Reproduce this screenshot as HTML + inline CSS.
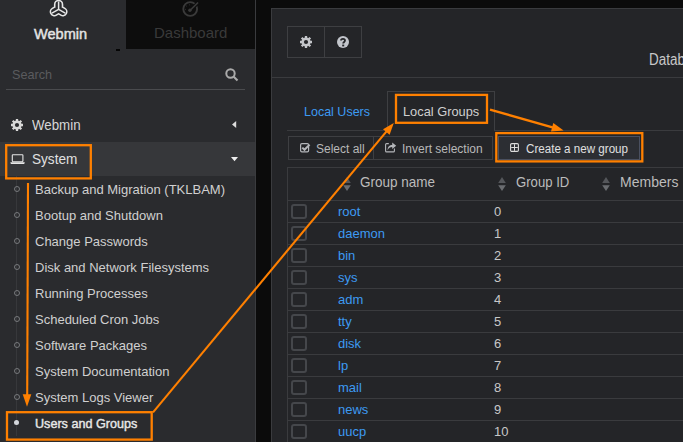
<!DOCTYPE html>
<html><head><meta charset="utf-8">
<style>
*{margin:0;padding:0;box-sizing:border-box}
html,body{width:683px;height:442px;overflow:hidden;background:#0b0b0b;font-family:"Liberation Sans",sans-serif}
.a{position:absolute;white-space:nowrap}
#side{position:absolute;left:0;top:0;width:256px;height:442px;background:#2a2b2e;border-right:1px solid #3a3b3e}
#dash{position:absolute;left:126px;top:0;width:129px;height:49px;background:#0d0d0d}
.mi{position:absolute;left:0;width:255px;height:26px}
.sub{position:absolute;left:35px;font-size:13px;color:#d0d0d0}
.bul{position:absolute;left:13.6px;width:6.2px;height:6.2px;border:1.1px solid #77797c;border-radius:50%}
#panel{position:absolute;left:271px;top:8px;width:420px;height:440px;background:#242528;border:1px solid #3a3b3e}
.ln{position:absolute;background:#3a3b3e}
.btn{position:absolute;border:1px solid #3e3f42;color:#b8b8b8;font-size:12px}
.lk{position:absolute;left:338px;font-size:13px;color:#3d9af2}
.num{position:absolute;left:494px;font-size:13px;color:#c8c8c8}
.cb{position:absolute;left:291px;width:16px;height:15px;border:2px solid #45474b;border-radius:3px}
.th{position:absolute;font-size:15px;color:#bcbcbc}
.sort{position:absolute;width:8px;height:14px}
</style></head><body>
<div id="side">
  <!-- webmin tab -->
  <svg class="a" style="left:0;top:0" width="80" height="20" viewBox="0 0 80 20">
    <g stroke-linecap="round" fill="none">
      <path d="M58.6 9.3 L58.60 4.40 M58.6 9.3 L54.36 11.75 M58.6 9.3 L62.84 11.75" stroke="#e6e6e6" stroke-width="9.4"/>
      <path d="M58.6 9.3 L58.60 4.40 M58.6 9.3 L54.36 11.75 M58.6 9.3 L62.84 11.75" stroke="#2a2b2e" stroke-width="6.2"/>
      <path d="M58.6 9.3 L58.60 1.60 M58.6 9.3 L51.93 13.15 M58.6 9.3 L65.27 13.15" stroke="#e6e6e6" stroke-width="1.5" stroke-linecap="butt"/>
    </g>
  </svg>
  <div class="a" style="left:33.6px;top:25px;font-size:15px;color:#e4e4e4;-webkit-text-stroke:0.45px #e4e4e4;transform:scaleX(0.97);transform-origin:0 0">Webmin</div>
  <div id="dash"></div>
  <svg class="a" style="left:175px;top:0" width="30" height="20" viewBox="175 0 30 20">
    <circle cx="190.2" cy="9" r="6.9" fill="none" stroke="#3a3a3a" stroke-width="1.9"/>
    <path d="M191 9.5 L198.6 2.2" stroke="#0d0d0d" stroke-width="3.6"/>
    <path d="M190.4 10 L197.6 3" stroke="#3a3a3a" stroke-width="1.7" stroke-linecap="round"/>
    <circle cx="189.9" cy="10.3" r="1.7" fill="#3a3a3a"/>
    <g fill="#2e2e2e"><circle cx="186.5" cy="6" r="0.6"/><circle cx="189.5" cy="4.8" r="0.6"/><circle cx="185.5" cy="9.3" r="0.6"/></g>
  </svg>
  <div class="a" style="left:154px;top:24px;font-size:15px;color:#3a3a3a">Dashboard</div>
  <div class="a" style="left:116px;top:49px;width:4px;height:2px;background:#050505"></div>
  <!-- search -->
  <div class="a" style="left:12px;top:67px;font-size:13px;color:#5a5b5e;transform:scaleX(0.97);transform-origin:0 0">Search</div>
  <svg class="a" style="left:225px;top:68px" width="14" height="14" viewBox="0 0 14 14">
    <circle cx="5.5" cy="5.5" r="4.2" fill="none" stroke="#aaa" stroke-width="2"/>
    <path d="M8.5 8.5 L12.5 12.5" stroke="#aaa" stroke-width="2.2"/>
  </svg>
  <div class="a" style="left:6px;top:89px;width:239px;height:1px;background:#4a4b4e"></div>
  <!-- menu -->
  <svg class="a" style="left:11px;top:119px" width="12" height="12" viewBox="0 0 12 12">
    <g stroke="#d8d8d8" stroke-width="2.3"><path d="M6 -0.1V12.1M-0.1 6H12.1M1.7 1.7L10.3 10.3M10.3 1.7L1.7 10.3"/></g>
    <circle cx="6" cy="6" r="3.4" fill="none" stroke="#d8d8d8" stroke-width="2.4"/>
    <circle cx="6" cy="6" r="2.1" fill="#2a2b2e"/>
  </svg>
  <div class="a" style="left:32px;top:116px;font-size:15px;color:#d8d8d8;transform:scaleX(0.887);transform-origin:0 0">Webmin</div>
  <svg class="a" style="left:231.5px;top:121.3px" width="5" height="8"><path d="M4.2 0V7L0 3.5Z" fill="#ddd"/></svg>
  <div class="a" style="left:0;top:142px;width:255px;height:34px;background:#36373a"></div>
  <svg class="a" style="left:0;top:140px" width="30" height="30" viewBox="0 140 30 30">
    <rect x="12.3" y="154.7" width="10.6" height="7" rx="0.6" fill="none" stroke="#e6e6e6" stroke-width="1.1"/>
    <path d="M10.3 162.3 H24.8 L24.2 163.9 H10.9 Z" fill="#e6e6e6"/>
  </svg>
  <div class="a" style="left:32px;top:150px;font-size:15px;color:#e0e0e0;transform:scaleX(0.906);transform-origin:0 0">System</div>
  <svg class="a" style="left:230.5px;top:156.8px" width="8" height="5"><path d="M0 0H7L3.5 4.3Z" fill="#eee"/></svg>
  <!-- tree line -->
  <div class="a" style="left:16px;top:176px;width:1px;height:260px;background:#37383b"></div>
  <div class="bul" style="top:186px"></div>
  <div class="sub" style="top:182px">Backup and Migration (TKLBAM)</div>
  <div class="bul" style="top:212px"></div>
  <div class="sub" style="top:208px">Bootup and Shutdown</div>
  <div class="bul" style="top:238px"></div>
  <div class="sub" style="top:234px">Change Passwords</div>
  <div class="bul" style="top:264px"></div>
  <div class="sub" style="top:260px">Disk and Network Filesystems</div>
  <div class="bul" style="top:290px"></div>
  <div class="sub" style="top:286px">Running Processes</div>
  <div class="bul" style="top:316px"></div>
  <div class="sub" style="top:312px">Scheduled Cron Jobs</div>
  <div class="bul" style="top:342px"></div>
  <div class="sub" style="top:338px">Software Packages</div>
  <div class="bul" style="top:368px"></div>
  <div class="sub" style="top:364px">System Documentation</div>
  <div class="bul" style="top:394px"></div>
  <div class="sub" style="top:390px">System Logs Viewer</div>
  <div class="a" style="left:13.8px;top:419.8px;width:5.6px;height:5.6px;border-radius:50%;background:#d4d7dc"></div>
  <div class="sub" style="top:416px;color:#e8e8e8;-webkit-text-stroke:0.4px #e8e8e8;transform:scaleX(0.97);transform-origin:0 0">Users and Groups</div>
</div>

<div id="panel"></div>
<!-- header buttons -->
<div class="a" style="left:287px;top:26px;width:75px;height:32px;border:1px solid #3e3f42"></div>
<div class="a" style="left:324px;top:26px;width:1px;height:32px;background:#3e3f42"></div>
<svg class="a" style="left:300px;top:36px" width="12" height="12" viewBox="0 0 12 12">
  <g stroke="#c4c6ca" stroke-width="2.3"><path d="M6 -0.1V12.1M-0.1 6H12.1M1.7 1.7L10.3 10.3M10.3 1.7L1.7 10.3"/></g>
  <circle cx="6" cy="6" r="3.4" fill="none" stroke="#c4c6ca" stroke-width="2.4"/>
  <circle cx="6" cy="6" r="2.1" fill="#242528"/>
</svg>
<svg class="a" style="left:337px;top:36px" width="12" height="12" viewBox="0 0 12 12">
  <circle cx="6" cy="6" r="6" fill="#c2c5cb"/>
  <path d="M4 4.6 C4 2.2 8 2.2 8 4.6 C8 6 6.2 6 6.2 7.6" fill="none" stroke="#242528" stroke-width="1.8"/>
  <rect x="5.2" y="8.6" width="2" height="1.8" fill="#242528"/>
</svg>
<div class="a" style="left:649px;top:50.6px;font-size:16px;color:#c8c8c8;transform:scaleX(0.84);transform-origin:0 0">Database</div>
<div class="ln" style="left:272px;top:77px;width:411px;height:1px"></div>

<!-- tabs -->
<div class="a" style="left:303.5px;top:104px;font-size:13px;color:#3d9af2;transform:scaleX(0.962);transform-origin:0 0">Local Users</div>
<div class="a" style="left:387px;top:91px;width:108px;height:40px;border:1px solid #3e3f42;border-bottom:none;background:#242528"></div>
<div class="ln" style="left:287px;top:130px;width:100px;height:1px"></div>
<div class="ln" style="left:495px;top:130px;width:188px;height:1px"></div>
<div class="a" style="left:403px;top:104px;font-size:13px;color:#d0d0d0;transform:scaleX(0.985);transform-origin:0 0">Local Groups</div>

<!-- buttons -->
<div class="btn" style="left:288px;top:136px;width:86px;height:24px"></div>
<div class="btn" style="left:373px;top:136px;width:120px;height:24px"></div>
<svg class="a" style="left:299px;top:142px" width="13" height="11" viewBox="0 0 13 11">
  <rect x="1.6" y="1.6" width="8" height="8.2" rx="1.3" fill="none" stroke="#b4b6ba" stroke-width="1.2"/>
  <path d="M3.3 5.6 L5.5 7.8 L10.6 2.6" fill="none" stroke="#b4b6ba" stroke-width="2"/>
</svg>
<div class="a" style="left:316px;top:142px;font-size:12px;color:#b8b8b8">Select all</div>
<svg class="a" style="left:0;top:0" width="683" height="442" viewBox="0 0 683 442">
  <path d="M388.8 143.6 H386.6 Q385.6 143.6 385.6 144.6 V150.9 Q385.6 151.9 386.6 151.9 H393.4 Q394.4 151.9 394.4 150.9 V148.6" fill="none" stroke="#b4b6ba" stroke-width="1.1"/>
  <path d="M387.6 150.2 C387.6 146.6 389.6 145 392.2 145 V142.6 L396.2 145.8 L392.2 149 V147 C390.2 147 388.6 147.9 387.6 150.2 Z" fill="#b4b6ba"/>
</svg>
<div class="a" style="left:402px;top:142px;font-size:12px;color:#b8b8b8">Invert selection</div>
<div class="a" style="left:498px;top:136px;width:142px;height:24px;border:1px solid #4a5060;background:#2c2e33"></div>
<svg class="a" style="left:510px;top:143px" width="9" height="9" viewBox="0 0 9 9">
  <rect x="0.6" y="0.6" width="7.8" height="7.8" rx="1.2" fill="none" stroke="#dcdcdc" stroke-width="1.1"/>
  <path d="M4.5 1.2V7.8M1.2 4.5H7.8" stroke="#dcdcdc" stroke-width="1"/>
</svg>
<div class="a" style="left:525.5px;top:142px;font-size:12px;color:#e0e0e0;transform:scaleX(0.968);transform-origin:0 0">Create a new group</div>

<!-- table -->
<div class="a" style="left:287px;top:167px;width:400px;height:280px;border:1px solid #3a3b3e"></div>
<div class="ln" style="left:288px;top:200px;width:395px;height:1px"></div>
<svg class="sort" style="left:342.5px;top:176.7px" viewBox="0 0 8 14"><path d="M4 0L7.8 6H0.2Z" fill="#55575b"/><path d="M4 14L7.8 8.2H0.2Z" fill="#6a6c70"/></svg>
<div class="th" style="left:359.5px;top:173px;transform:scaleX(0.90);transform-origin:0 0">Group name</div>
<svg class="sort" style="left:498.3px;top:176.7px" viewBox="0 0 8 14"><path d="M4 0L7.8 6H0.2Z" fill="#55575b"/><path d="M4 14L7.8 8.2H0.2Z" fill="#6a6c70"/></svg>
<div class="th" style="left:515.5px;top:173px;transform:scaleX(0.876);transform-origin:0 0">Group ID</div>
<svg class="sort" style="left:602.3px;top:176.7px" viewBox="0 0 8 14"><path d="M4 0L7.8 6H0.2Z" fill="#55575b"/><path d="M4 14L7.8 8.2H0.2Z" fill="#6a6c70"/></svg>
<div class="th" style="left:619.5px;top:173px;transform:scaleX(0.934);transform-origin:0 0">Members</div>

<div class="cb" style="top:204px"></div>
<div class="lk" style="top:204px">root</div>
<div class="num" style="top:204px">0</div>
<div class="ln" style="left:288px;top:222px;width:395px;height:1px"></div>
<div class="cb" style="top:226px"></div>
<div class="lk" style="top:226px">daemon</div>
<div class="num" style="top:226px">1</div>
<div class="ln" style="left:288px;top:244px;width:395px;height:1px"></div>
<div class="cb" style="top:248px"></div>
<div class="lk" style="top:248px">bin</div>
<div class="num" style="top:248px">2</div>
<div class="ln" style="left:288px;top:266px;width:395px;height:1px"></div>
<div class="cb" style="top:270px"></div>
<div class="lk" style="top:270px">sys</div>
<div class="num" style="top:270px">3</div>
<div class="ln" style="left:288px;top:288px;width:395px;height:1px"></div>
<div class="cb" style="top:292px"></div>
<div class="lk" style="top:292px">adm</div>
<div class="num" style="top:292px">4</div>
<div class="ln" style="left:288px;top:310px;width:395px;height:1px"></div>
<div class="cb" style="top:314px"></div>
<div class="lk" style="top:314px">tty</div>
<div class="num" style="top:314px">5</div>
<div class="ln" style="left:288px;top:332px;width:395px;height:1px"></div>
<div class="cb" style="top:336px"></div>
<div class="lk" style="top:336px">disk</div>
<div class="num" style="top:336px">6</div>
<div class="ln" style="left:288px;top:354px;width:395px;height:1px"></div>
<div class="cb" style="top:358px"></div>
<div class="lk" style="top:358px">lp</div>
<div class="num" style="top:358px">7</div>
<div class="ln" style="left:288px;top:376px;width:395px;height:1px"></div>
<div class="cb" style="top:380px"></div>
<div class="lk" style="top:380px">mail</div>
<div class="num" style="top:380px">8</div>
<div class="ln" style="left:288px;top:398px;width:395px;height:1px"></div>
<div class="cb" style="top:402px"></div>
<div class="lk" style="top:402px">news</div>
<div class="num" style="top:402px">9</div>
<div class="ln" style="left:288px;top:420px;width:395px;height:1px"></div>
<div class="cb" style="top:424px"></div>
<div class="lk" style="top:424px">uucp</div>
<div class="num" style="top:424px">10</div>

<!-- annotations -->
<svg id="ann" class="a" style="left:0;top:0" width="683" height="442" viewBox="0 0 683 442">
  <g fill="none" stroke="#ff8000" stroke-width="2.3">
    <rect x="6.2" y="145.2" width="84.6" height="33.2"/>
    <rect x="7" y="412.2" width="144.7" height="27.4"/>
    <rect x="396" y="94.9" width="91" height="27.9"/>
    <rect x="496.3" y="133.1" width="146" height="28.3"/>
    <path d="M28 183 L27.2 397" stroke-width="2.1"/>
    <path d="M153 412.3 L388.8 128.6" stroke-width="2.1"/>
    <path d="M490 109.6 L556 128.3" stroke-width="2.3"/>
  </g>
  <g fill="#ff8000">
    <path d="M22.7 394.3 L31.3 394.3 L27 406.8 Z"/>
    <path d="M393.8 123 L383 129.3 L389.6 134.7 Z"/>
    <path d="M563.6 130.5 L553.3 122.9 L551 131.4 Z"/>
  </g>
</svg>
</body></html>
